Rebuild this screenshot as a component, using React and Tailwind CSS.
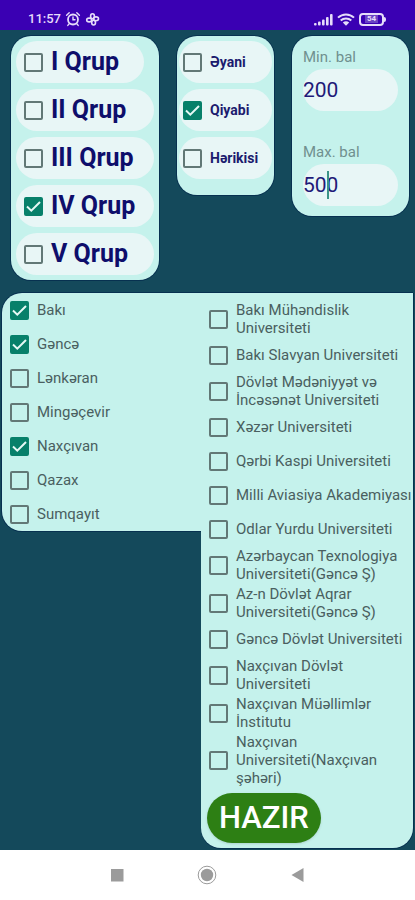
import React, { useState } from "react";

const GROUPS = ["I Qrup", "II Qrup", "III Qrup", "IV Qrup", "V Qrup"];

const STUDY_TYPES = ["Əyani", "Qiyabi", "Hərikisi"];

const CITIES = [
  "Bakı",
  "Gəncə",
  "Lənkəran",
  "Mingəçevir",
  "Naxçıvan",
  "Qazax",
  "Sumqayıt",
];

const UNIVERSITIES = [
  "Bakı Mühəndislik Universiteti",
  "Bakı Slavyan Universiteti",
  "Dövlət Mədəniyyət və İncəsənət Universiteti",
  "Xəzər Universiteti",
  "Qərbi Kaspi Universiteti",
  "Milli Aviasiya Akademiyası",
  "Odlar Yurdu Universiteti",
  "Azərbaycan Texnologiya Universiteti(Gəncə Ş)",
  "Az-n Dövlət Aqrar Universiteti(Gəncə Ş)",
  "Gəncə Dövlət Universiteti",
  "Naxçıvan Dövlət Universiteti",
  "Naxçıvan Müəllimlər İnstitutu",
  "Naxçıvan Universiteti(Naxçıvan şəhəri)",
];

const CheckItem = ({ label, checked, onChange, className }) => (
  <label className={`flex items-center gap-2 ${className}`}>
    <span className="grid shrink-0 place-items-center">
      <input
        type="checkbox"
        checked={checked}
        onChange={onChange}
        className="peer col-start-1 row-start-1 size-[19px] appearance-none rounded-[2px] border-2 border-[#627876] checked:border-[#07806a] checked:bg-[#07806a]"
      />
      <svg
        viewBox="0 0 19 19"
        className="pointer-events-none invisible col-start-1 row-start-1 size-[19px] peer-checked:visible"
        fill="none"
        stroke="#e6f8f5"
        strokeWidth="2"
      >
        <path d="M3 9.5 7.3 13.7 16 5" />
      </svg>
    </span>
    <span>{label}</span>
  </label>
);

const ScoreField = ({ id, label, value, onChange, caret }) => (
  <div>
    <label htmlFor={id} className="block text-[15px] leading-6 text-[#70908f]">
      {label}
    </label>
    <div className="relative">
      <input
        id={id}
        type="text"
        inputMode="numeric"
        value={value}
        onChange={onChange}
        className="block h-[42px] w-full rounded-full bg-[#e8f6f6] text-[21px] text-[#1f1a78] outline-none"
      />
      {caret && (
        <span className="absolute top-[7px] left-6 h-7 w-[2px] bg-[#3c9488]" />
      )}
    </div>
  </div>
);

const StatusBar = () => (
  <header className="flex h-[30px] items-center justify-between bg-[#3a00b3] pt-2 pr-[29px] pl-7 text-[#e6dcfa]">
    <div className="flex items-center gap-1">
      <span className="text-[13px] leading-4 font-medium">11:57</span>
      <svg
        width="16"
        height="16"
        viewBox="0 0 16 16"
        fill="none"
        stroke="currentColor"
        strokeLinecap="round"
      >
        <circle cx="8" cy="8.5" r="5" strokeWidth="1.8" />
        <path
          d="M8 6v2.7h2M1.6 4.2 4.2 1.8M14.4 4.2 11.8 1.8M4 13l-1.2 1.4M12 13l1.2 1.4"
          strokeWidth="1.4"
        />
      </svg>
      <svg
        width="15"
        height="15"
        viewBox="0 0 15 15"
        fill="none"
        stroke="currentColor"
        strokeWidth="1.6"
      >
        <ellipse cx="7.5" cy="4.3" rx="1.9" ry="2.5" />
        <ellipse cx="11" cy="6.8" rx="2.5" ry="1.9" />
        <ellipse cx="8.6" cy="10.6" rx="1.9" ry="2.4" />
        <ellipse cx="4.2" cy="8" rx="2.5" ry="1.9" />
      </svg>
    </div>
    <div className="flex items-center gap-1">
      <svg width="19" height="13" viewBox="0 0 19 13" fill="currentColor">
        <rect x="0" y="10" width="2.6" height="2.5" rx="1" />
        <rect x="4" y="8.5" width="2.6" height="4" rx="1" />
        <rect x="8" y="6.5" width="2.6" height="6" rx="1" />
        <rect x="12" y="4" width="2.6" height="8.5" rx="1" />
        <rect x="16" y="1" width="2.6" height="11.5" rx="1" />
      </svg>
      <svg
        width="18"
        height="13"
        viewBox="0 0 18 13"
        fill="none"
        stroke="currentColor"
        strokeWidth="2"
      >
        <path d="M1 4.6C5.5 0.3 12.5 0.3 17 4.6M3.7 7.6c3-2.7 7.6-2.7 10.6 0" />
        <path
          d="M5.8 9.4c2-1.4 4.4-1.4 6.4 0L9 12.8Z"
          fill="currentColor"
          stroke="none"
        />
      </svg>
      <div className="flex items-center">
        <span className="flex h-[13px] w-[25px] items-center justify-center rounded-[4px] border-2 border-current">
          <span className="bg-[#6a42c4] px-[2px] text-[8px] leading-[8px] font-bold">
            54
          </span>
        </span>
        <span className="h-[5px] w-[2px] rounded-r-sm bg-current" />
      </div>
    </div>
  </header>
);

const NavBar = () => (
  <nav className="flex h-[50px] items-center justify-around bg-white px-[72px] text-[#9b9b9b]">
    <button type="button" aria-label="Recent apps">
      <svg width="20" height="20" viewBox="0 0 20 20" fill="currentColor">
        <rect x="4" y="4" width="12.5" height="12.5" />
      </svg>
    </button>
    <button type="button" aria-label="Home">
      <svg width="20" height="20" viewBox="0 0 20 20" fill="currentColor">
        <circle cx="10" cy="10" r="6.2" />
        <circle cx="10" cy="10" r="8.8" fill="none" stroke="currentColor" />
      </svg>
    </button>
    <button type="button" aria-label="Back">
      <svg width="20" height="20" viewBox="0 0 20 20" fill="currentColor">
        <path d="M3.5 10 15.5 3v14Z" />
      </svg>
    </button>
  </nav>
);

const App = () => {
  const [selected, setSelected] = useState([
    "IV Qrup",
    "Qiyabi",
    "Bakı",
    "Gəncə",
    "Naxçıvan",
  ]);
  const [minScore, setMinScore] = useState("200");
  const [maxScore, setMaxScore] = useState("500");

  const toggle = (name) =>
    setSelected((prev) =>
      prev.includes(name) ? prev.filter((n) => n !== name) : [...prev, name]
    );

  return (
    <div className="flex min-h-screen flex-col bg-[#14495b] font-['Roboto',sans-serif]">
      <StatusBar />
      <main className="flex-1">
        {/* Filters */}
        <div className="grid grid-cols-[148fr_97fr_117fr] items-start gap-[18px] pt-[6px] pr-[6px] pl-[11px]">
          <section className="flex flex-col items-stretch gap-[6px] rounded-[20px] bg-[#c5f2ec] px-[5px] pt-[5px] pb-[5px] ring-1 ring-[#073150]">
            {GROUPS.map((name, i) => (
              <CheckItem
                key={name}
                label={name}
                checked={selected.includes(name)}
                onChange={() => toggle(name)}
                className={`h-[42px] rounded-full bg-[#e8f6f6] pl-2 text-[25px] font-bold text-[#0e0e6b] ${
                  i === 0 ? "mr-[10px]" : ""
                }`}
              />
            ))}
          </section>

          <section className="flex flex-col gap-[6px] rounded-[20px] bg-[#c5f2ec] px-[2px] pt-[5px] pb-4 ring-1 ring-[#073150]">
            {STUDY_TYPES.map((name) => (
              <CheckItem
                key={name}
                label={name}
                checked={selected.includes(name)}
                onChange={() => toggle(name)}
                className="h-[42px] rounded-full bg-[#e8f6f6] pl-1 text-sm font-bold text-[#1b1b6e]"
              />
            ))}
          </section>

          <section className="flex flex-col gap-[29px] rounded-[20px] bg-[#c5f2ec] px-[11px] pt-[9px] pb-[10px] ring-1 ring-[#073150]">
            <ScoreField
              id="min-score"
              label="Min. bal"
              value={minScore}
              onChange={(e) => setMinScore(e.target.value)}
            />
            <ScoreField
              id="max-score"
              label="Max. bal"
              value={maxScore}
              onChange={(e) => setMaxScore(e.target.value)}
              caret
            />
          </section>
        </div>

        {/* Cities and universities */}
        <div className="mt-[13px] grid grid-cols-[199fr_212fr] items-start px-[2px]">
          <section className="rounded-l-[20px] bg-[#c5f2ec] pl-2 text-[15px] text-[#4a5f60] ring-1 ring-[#073150]">
            {CITIES.map((name) => (
              <CheckItem
                key={name}
                label={name}
                checked={selected.includes(name)}
                onChange={() => toggle(name)}
                className="h-[34px]"
              />
            ))}
          </section>

          <section className="rounded-b-[20px] bg-[#c5f2ec] pt-[7px] pb-[5px] pl-2 text-[15px] leading-[18px] text-[#4a5f60] shadow-[0_1px_0_#073150,1px_0_0_#073150,0_-1px_0_#073150]">
            {UNIVERSITIES.map((name) => (
              <CheckItem
                key={name}
                label={name}
                checked={selected.includes(name)}
                onChange={() => toggle(name)}
                className="min-h-[34px] py-px"
              />
            ))}
            <button
              type="button"
              className="mt-[5px] -ml-[2px] h-[50px] rounded-full bg-[#2d7f14] px-3 text-[31px] font-medium text-white shadow-sm"
            >
              HAZIR
            </button>
          </section>
        </div>
      </main>
      <NavBar />
    </div>
  );
};

export default App;
